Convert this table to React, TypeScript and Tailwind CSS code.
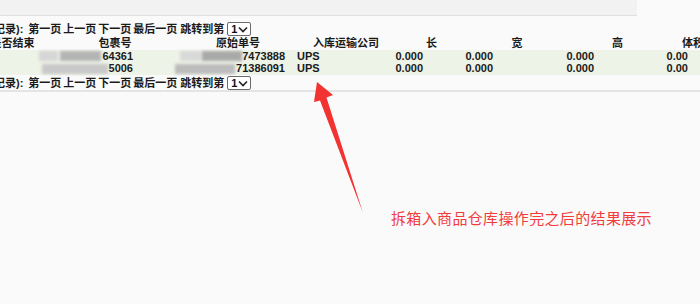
import React from "react";

const Sel = () => (
  <div className="ml-[3px] flex h-[14px] w-[24px] items-center justify-between rounded-[2px] border border-[#6b6b6b] bg-white pl-[3px] pr-[2px]">
    <span className="text-[11px] leading-none font-bold text-[#111]">1</span>
    <svg width="10" height="7" viewBox="0 0 10 7">
      <path d="M1 1.5 L5 5.5 L9 1.5" fill="none" stroke="#222" strokeWidth="1.6" />
    </svg>
  </div>
);

const Pager = () => (
  <div className="flex h-[14px] items-center whitespace-nowrap ml-[-6px]">
    <span>记录):</span>
    <span className="ml-[5px]">第一页</span>
    <span className="ml-[2px]">上一页</span>
    <span className="ml-[2px]">下一页</span>
    <span className="ml-[2px]">最后一页</span>
    <span className="ml-[3px]">跳转到第</span>
    <Sel />
  </div>
);

const Blob = ({ w, c, ml = 0 }: { w: number; c: string; ml?: number }) => (
  <div
    className="h-[10px] blur-[1.4px]"
    style={{ width: w, background: c, marginLeft: ml }}
  />
);

export default function App() {
  return (
    <div
      className="relative h-[304px] w-[700px] overflow-hidden bg-[#fafafa] text-[11px] font-bold text-[#1a1a1a]"
      style={{ fontFamily: '"Liberation Sans", "Noto Sans CJK SC", sans-serif' }}
    >
      <div className="h-[16px] w-[637px] border-b border-[#dfdfdf] bg-[#f2f2f2]" />

      <div className="mt-[6px] ml-[-10px] w-[760px]">
        <div className="ml-[10px]">
          <Pager />
        </div>

        {/* header */}
        <div className="mt-[1px] flex h-[13px] items-center whitespace-nowrap">
          <div className="w-[45px] text-center">是否结束</div>
          <div className="w-[160px] text-center">包裹号</div>
          <div className="w-[86px] text-center">原始单号</div>
          <div className="w-[130px] text-center">入库运输公司</div>
          <div className="w-[41px] text-center">长</div>
          <div className="w-[130px] text-center">宽</div>
          <div className="w-[71px] text-center">高</div>
          <div className="w-[80px] text-center">体积</div>
        </div>

        {/* rows */}
        <div className="bg-[#eef3e7]">
          <div className="flex h-[12px] items-center whitespace-nowrap">
            <div className="w-[49px]" />
            <div className="flex w-[97px] items-center justify-end pr-[3px]">
              <Blob w={20} c="#d6d6d6" />
              <Blob w={42} c="#b4b4b4" ml={2} />
              <span className="ml-[1px]">64361</span>
            </div>
            <div className="flex w-[152px] items-center justify-end pr-[3px]">
              <Blob w={22} c="#d9d9d9" />
              <Blob w={40} c="#a9a9a9" />
              <span>7473888</span>
            </div>
            <div className="w-[107px] pl-[9px]">UPS</div>
            <div className="w-[31px] text-right pr-[3px]">0.000</div>
            <div className="w-[70px] text-right pr-[3px]">0.000</div>
            <div className="w-[101px] text-right pr-[3px]">0.000</div>
            <div className="w-[94px] text-right pr-[3px]">0.00</div>
          </div>
          <div className="flex h-[13px] items-center whitespace-nowrap">
            <div className="w-[49px]" />
            <div className="flex w-[97px] items-center justify-end pr-[3px]">
              <Blob w={66} c="#c8c8c8" />
              <span className="ml-[1px]">5006</span>
            </div>
            <div className="flex w-[152px] items-center justify-end pr-[3px]">
              <Blob w={60} c="#bcbcbc" />
              <span className="ml-[1px]">71386091</span>
            </div>
            <div className="w-[107px] pl-[9px]">UPS</div>
            <div className="w-[31px] text-right pr-[3px]">0.000</div>
            <div className="w-[70px] text-right pr-[3px]">0.000</div>
            <div className="w-[101px] text-right pr-[3px]">0.000</div>
            <div className="w-[94px] text-right pr-[3px]">0.00</div>
          </div>
        </div>

        <div className="ml-[10px] mt-[1px]">
          <Pager />
        </div>
      </div>

      <div className="h-[2px] w-full bg-[#e4e4e4]" />

      <svg className="absolute left-0 top-0" width="700" height="304">
        <polygon
          points="317,82 333,95 326.5,97.5 363,213 320,100.5 314,102"
          fill="#f33232"
        />
      </svg>

      <div
        className="absolute left-[391px] top-[208px] text-[15px] font-normal leading-[20px] tracking-[0.35px] text-[#f23c3c]"
        style={{ fontFamily: '"Noto Sans CJK SC", sans-serif' }}
      >
        拆箱入商品仓库操作完之后的结果展示
      </div>
    </div>
  );
}
